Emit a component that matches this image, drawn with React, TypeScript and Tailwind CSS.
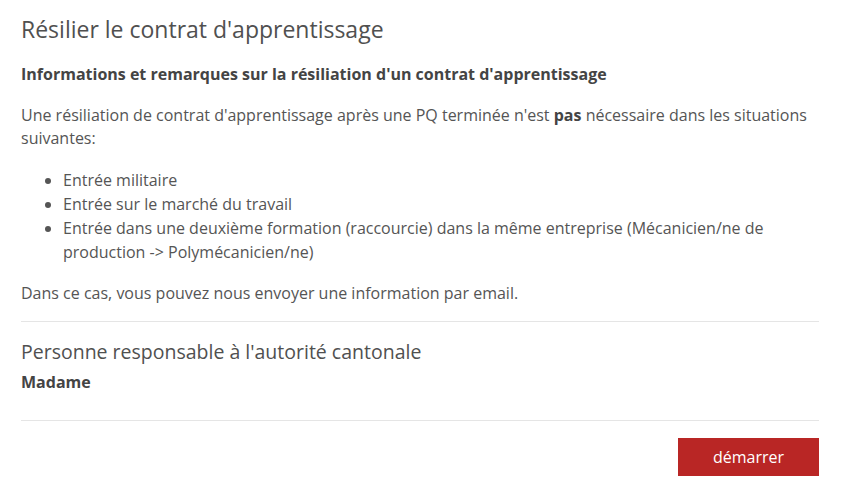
export default function App() {
  return (
    <div
      className="min-h-screen bg-white px-[21px] pt-[14px] text-[#555]"
      style={{ fontFamily: "'Open Sans', 'Noto Sans', sans-serif" }}
    >
      <div className="w-[798px]">
        <h1 className="text-[23px] leading-[30px] text-[#505050]">Résilier le contrat d'apprentissage</h1>
        <h2 className="mt-[18px] text-[16px] font-bold leading-[24px] text-[#444]">
          Informations et remarques sur la résiliation d'un contrat d'apprentissage
        </h2>
        <p className="mt-[18px] text-[16px] leading-[23px]">
          Une résiliation de contrat d'apprentissage après une PQ terminée n'est{" "}
          <strong className="font-bold text-[#444]">pas</strong> nécessaire dans les situations suivantes:
        </p>
        <ul className="mt-[18px] list-disc pl-[42px] text-[16px] leading-[24px]">
          <li>Entrée militaire</li>
          <li>Entrée sur le marché du travail</li>
          <li>
            Entrée dans une deuxième formation (raccourcie) dans la même entreprise (Mécanicien/ne de production
            -&gt; Polymécanicien/ne)
          </li>
        </ul>
        <p className="mt-[17px] text-[16px] leading-[24px]">
          Dans ce cas, vous pouvez nous envoyer une information par email.
        </p>
        <div className="mt-[16px] border-t border-[#e5e5e5]" />
        <h3 className="mt-[17px] text-[19.5px] leading-[26px] text-[#505050]">
          Personne responsable à l'autorité cantonale
        </h3>
        <p className="mt-[5px] text-[16px] font-bold leading-[24px] text-[#444]">Madame</p>
        <div className="mt-[26px] border-t border-[#e5e5e5]" />
        <div className="mt-[17px] flex justify-end">
          <button className="h-[38px] w-[141px] bg-[#b92625] text-[16px] text-white">démarrer</button>
        </div>
      </div>
    </div>
  );
}
